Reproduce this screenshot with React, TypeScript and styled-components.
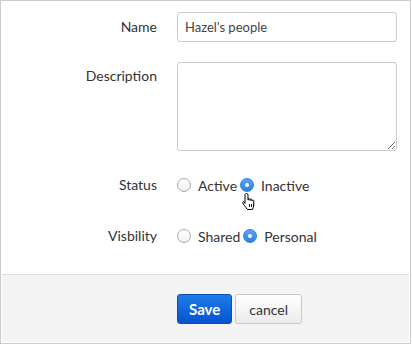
import styled, { createGlobalStyle } from "styled-components";

const GlobalStyle = createGlobalStyle`
  html, body {
    margin: 0;
    padding: 0;
    background: #ffffff;
  }

  body {
    font-family: Lato, "Open Sans", sans-serif;
    color: #333333;
  }
`

const Frame = styled.div`
  position: relative;
  box-sizing: border-box;
  width: 411px;
  height: 344px;
  border: 1px solid #cbcbcb;
  padding: 1px;
  display: flex;
  flex-direction: column;
  background: #ffffff;
`

const Form = styled.div`
  flex: 1;
  display: flex;
  flex-direction: column;
  padding-top: 10px;
`

const Row = styled.div<{ $gap: number }>`
  display: flex;
  align-items: flex-start;
  column-gap: 20px;
  margin-bottom: ${(p) => p.$gap}px;
`

const Label = styled.label<{ $top: number }>`
  width: 155px;
  flex-shrink: 0;
  text-align: right;
  font-size: 14px;
  line-height: 18px;
  padding-top: ${(p) => p.$top}px;
  color: #333333;
`

const TextInput = styled.input`
  box-sizing: border-box;
  width: 220px;
  height: 30px;
  border: 1px solid #cccccc;
  border-radius: 3px;
  padding: 0 7px;
  font-family: Lato, "Open Sans", sans-serif;
  font-size: 13px;
  color: #444444;
  outline: none;
`

const TextArea = styled.textarea`
  box-sizing: border-box;
  width: 220px;
  height: 89px;
  border: 1px solid #cccccc;
  border-radius: 3px;
  resize: vertical;
  font-family: Lato, "Open Sans", sans-serif;
  outline: none;
`

const Options = styled.div`
  display: flex;
  align-items: center;
  height: 20px;
  font-size: 14px;
  color: #333333;
`

const Radio = styled.span<{ $checked?: boolean }>`
  position: relative;
  box-sizing: border-box;
  width: 14px;
  height: 14px;
  border-radius: 50%;
  margin: 0 7px 0 0;
  border: 1px solid ${(p) => (p.$checked ? "#2f7fe0" : "#a9a9a9")};
  background: ${(p) =>
    p.$checked ? "linear-gradient(#5aa2f5, #2e7fe8)" : "linear-gradient(#ffffff, #f1f1f1)"};

  &::after {
    content: "";
    display: ${(p) => (p.$checked ? "block" : "none")};
    position: absolute;
    left: 50%;
    top: 50%;
    width: 4px;
    height: 4px;
    margin: -2px 0 0 -2px;
    border-radius: 50%;
    background: #ffffff;
  }
`

const OptionText = styled.span`
  margin-right: 3px;
`

const Footer = styled.div`
  height: 68px;
  box-sizing: border-box;
  background: #f4f4f4;
  border-top: 1px solid #dedede;
  display: flex;
  align-items: flex-start;
  gap: 3px;
  padding: 19px 0 0 175px;
`

const Button = styled.button<{ $primary?: boolean }>`
  box-sizing: border-box;
  height: 30px;
  padding: 0 ${(p) => (p.$primary ? 11 : 13)}px;
  border-radius: 3px;
  font-family: Lato, "Open Sans", sans-serif;
  font-size: ${(p) => (p.$primary ? 15 : 14)}px;
  font-weight: ${(p) => (p.$primary ? 700 : 400)};
  color: ${(p) => (p.$primary ? "#ffffff" : "#333333")};
  border: 1px solid ${(p) => (p.$primary ? "#0a4fb8" : "#c9c9c9")};
  background: ${(p) =>
    p.$primary ? "linear-gradient(#1d7ce8, #0653cf)" : "linear-gradient(#ffffff, #ececec)"};
`

const Cursor = styled.svg`
  position: absolute;
  left: 240px;
  top: 191px;
`

const App = () => {
  return (
    <>
      <GlobalStyle />
      <Frame>
        <Form>
          <Row $gap={20}>
            <Label $top={6}>Name</Label>
            <TextInput defaultValue="Hazel's people" />
          </Row>
          <Row $gap={24}>
            <Label $top={5}>Description</Label>
            <TextArea />
          </Row>
          <Row $gap={31}>
            <Label $top={1}>Status</Label>
            <Options>
              <Radio />
              <OptionText>Active</OptionText>
              <Radio $checked />
              <OptionText>Inactive</OptionText>
            </Options>
          </Row>
          <Row $gap={0}>
            <Label $top={1}>Visbility</Label>
            <Options>
              <Radio />
              <OptionText>Shared</OptionText>
              <Radio $checked />
              <OptionText>Personal</OptionText>
            </Options>
          </Row>
        </Form>
        <Footer>
          <Button $primary>Save</Button>
          <Button>cancel</Button>
        </Footer>
        <Cursor width="18" height="20" viewBox="0 0 18 20">
          <path
            d="M5.5 1.5c.8 0 1.5.6 1.5 1.4V8h.4V7.2c0-.9 1.6-.9 1.6 0V8.4h.3V7.8c0-.9 1.6-.9 1.6 0v1h.3c0-.9 1.6-.9 1.6 0v4.4c0 1.8-.8 3.2-1.3 4.3H6.4c-.6-1.1-2-2.5-3-4L1.8 11c-.6-.9.6-1.8 1.3-1L4 11.3V2.9c0-.8.7-1.4 1.5-1.4z"
            fill="#ffffff"
            stroke="#000000"
            strokeWidth="1"
            strokeLinejoin="round"
          />
          <path d="M8.5 12v3M10.5 12v3M12.5 12v3" stroke="#000000" strokeWidth="0.9" />
        </Cursor>
      </Frame>
    </>
  )
};

export default App;
